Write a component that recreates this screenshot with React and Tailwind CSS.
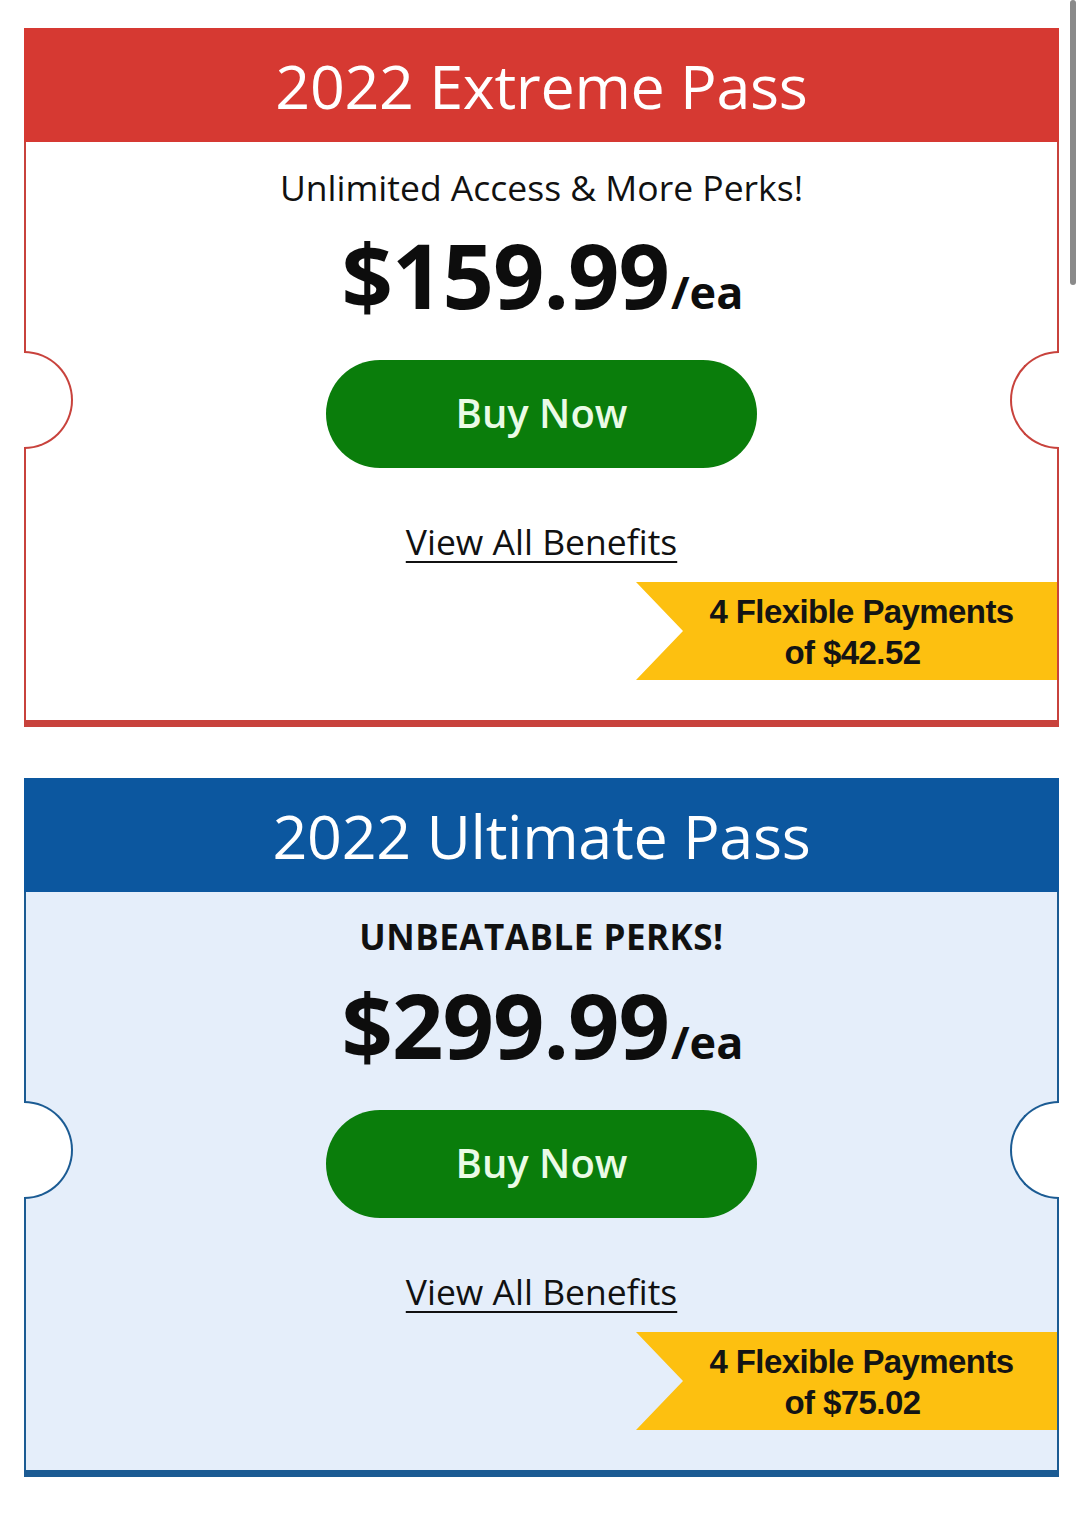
import React from "react";

const FONT = { fontFamily: '"Open Sans", "Noto Sans", sans-serif' };

function Card({ theme, title, subtitle, subtitleBold, price, payment }) {
  const red = theme === "red";
  return (
    <div className="w-[1035px] ml-[24px] relative">
      <div
        className={`h-[114px] flex items-center justify-center ${red ? "bg-[#d63932]" : "bg-[#0c579f]"}`}
      >
        <h2 className="text-white text-[61px] leading-none font-normal tracking-[-0.3px]">{title}</h2>
      </div>
      <div
        className={`relative h-[585px] border-x-2 border-b-[7px] flex flex-col items-center pt-[26px] ${
          red ? "border-[#c8423c] bg-white" : "border-[#1b5b93] bg-[#e5eefa]"
        }`}
      >
        <p
          className={`text-[#111] leading-[38px] h-[38px] ${
            subtitleBold ? "text-[35px] font-bold tracking-[0.5px]" : "text-[35.5px] font-normal"
          }`}
        >
          {subtitle}
        </p>
        <div className="mt-[23px] h-[91px] leading-[91px] text-[#0d0d0d] font-bold whitespace-nowrap pl-[2px]">
          <span className="text-[90px] tracking-[-1px]">{price}</span>
          <span className="text-[45px] ml-[2px]">/ea</span>
        </div>
        <button className="mt-[40px] w-[431px] h-[108px] rounded-full bg-[#0a7d0b] text-[#eafbe6] text-[40px] font-semibold flex items-center justify-center pb-[2px]">
          Buy Now
        </button>
        <a className="mt-[56px] h-[35px] leading-[35px] text-[35.5px] text-[#111] underline decoration-[2px] underline-offset-[6px]">
          View All Benefits
        </a>
        <div
          className="mt-[23px] self-end w-[421px] h-[98px] bg-[#fdc010] flex flex-col items-center justify-center pl-[30px] pt-[2px] [clip-path:polygon(0_0,100%_0,100%_100%,0_100%,47px_50%)]"
          style={{ fontFamily: '"Liberation Sans", Arial, sans-serif' }}
        >
          <span className="text-[33px] font-bold leading-[41px] text-[#141414] tracking-[-0.6px]">4 Flexible Payments</span>
          <span className="text-[33px] font-bold leading-[41px] text-[#141414] tracking-[-0.6px] pr-[18px]">of {payment}</span>
        </div>
        <div
          className={`absolute left-[-2px] top-[209px] w-[49px] h-[98px] rounded-r-full border-2 border-l-0 bg-white ${
            red ? "border-[#c8423c]" : "border-[#1b5b93]"
          }`}
        />
        <div
          className={`absolute right-[-2px] top-[209px] w-[49px] h-[98px] rounded-l-full border-2 border-r-0 bg-white ${
            red ? "border-[#c8423c]" : "border-[#1b5b93]"
          }`}
        />
      </div>
    </div>
  );
}

export default function App() {
  return (
    <div className="w-[1085px] h-[1517px] bg-white relative overflow-hidden pt-[28px]" style={FONT}>
      <Card
        theme="red"
        title="2022 Extreme Pass"
        subtitle="Unlimited Access & More Perks!"
        price="$159.99"
        payment="$42.52"
      />
      <div className="h-[51px]" />
      <Card
        theme="blue"
        title="2022 Ultimate Pass"
        subtitle="UNBEATABLE PERKS!"
        subtitleBold
        price="$299.99"
        payment="$75.02"
      />
      <div className="absolute top-0 left-[1070px] w-[6px] h-[285px] rounded-full bg-[#8a8a8a]" />
    </div>
  );
}
